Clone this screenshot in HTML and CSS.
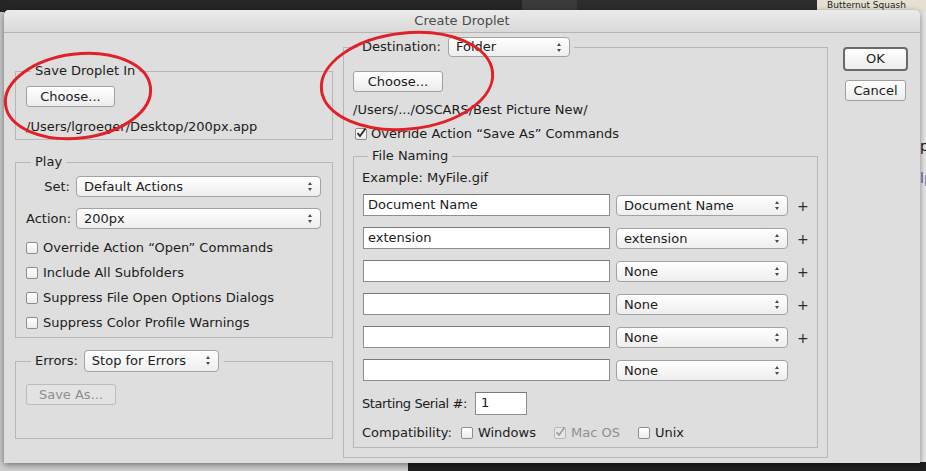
FILE: index.html
```html
<!DOCTYPE html>
<html>
<head>
<meta charset="utf-8">
<link rel="stylesheet" href="styles.css">
</head>
<body>
<div class="desktop">
  <div class="bg-top"><span class="bg-a"></span><span class="bg-b"></span><span class="bg-c"></span><span class="bg-d">Butternut Squash</span></div>
  <div class="bg-right"><span class="bg-p">p</span><span class="bg-lp">lp</span></div>
  <div class="bg-bottom"><span class="bb1"></span><span class="bb2"></span></div>

  <div class="dialog">
    <div class="titlebar">Create Droplet</div>
    <div class="content">
      <div class="leftcol">
        <fieldset class="group save">
          <legend>Save Droplet In</legend>
          <div class="btn choose">Choose...</div>
          <div class="path">/Users/lgroeger/Desktop/200px.app</div>
        </fieldset>

        <fieldset class="group play">
          <legend>Play</legend>
          <div class="formrow">
            <span class="lbl">Set:</span>
            <div class="select wide">Default Actions<span class="arrows"></span></div>
          </div>
          <div class="formrow second">
            <span class="lbl">Action:</span>
            <div class="select wide">200px<span class="arrows"></span></div>
          </div>
          <div class="checks">
            <div class="check"><span class="box"></span>Override Action “Open” Commands</div>
            <div class="check"><span class="box"></span>Include All Subfolders</div>
            <div class="check"><span class="box"></span>Suppress File Open Options Dialogs</div>
            <div class="check"><span class="box"></span>Suppress Color Profile Warnings</div>
          </div>
        </fieldset>

        <fieldset class="group errors">
          <legend><span class="errlbl">Errors:</span><div class="select errsel">Stop for Errors<span class="arrows"></span></div></legend>
          <div class="btn disabled">Save As...</div>
        </fieldset>
      </div>

      <fieldset class="group dest">
        <legend><span class="destlbl">Destination:</span><div class="select destsel">Folder<span class="arrows"></span></div></legend>
        <div class="btn choose2">Choose...</div>
        <div class="path2">/Users/.../OSCARS/Best Picture New/</div>
        <div class="check override"><span class="box checked"><svg width="12" height="12" viewBox="0 0 12 12"><path d="M2.5 6.2 L5 9 L10.5 1.5" fill="none" stroke="#2a2a2a" stroke-width="1.8"/></svg></span>Override Action “Save As” Commands</div>

        <fieldset class="group naming">
          <legend>File Naming</legend>
          <div class="example">Example: MyFile.gif</div>
          <div class="rows">
            <div class="namerow"><div class="field">Document Name</div><div class="select namesel">Document Name<span class="arrows"></span></div><span class="plus">+</span></div>
            <div class="namerow"><div class="field">extension</div><div class="select namesel">extension<span class="arrows"></span></div><span class="plus">+</span></div>
            <div class="namerow"><div class="field"></div><div class="select namesel">None<span class="arrows"></span></div><span class="plus">+</span></div>
            <div class="namerow"><div class="field"></div><div class="select namesel">None<span class="arrows"></span></div><span class="plus">+</span></div>
            <div class="namerow"><div class="field"></div><div class="select namesel">None<span class="arrows"></span></div><span class="plus">+</span></div>
            <div class="namerow"><div class="field"></div><div class="select namesel">None<span class="arrows"></span></div></div>
          </div>
          <div class="serial"><span class="seriallbl">Starting Serial #:</span><div class="field serialfield">1</div></div>
          <div class="compat">
            <span class="compatlbl">Compatibility:</span>
            <span class="check inl"><span class="box"></span>Windows</span>
            <span class="check inl dis"><span class="box checked dimbox"><svg width="12" height="12" viewBox="0 0 12 12"><path d="M2.5 6.2 L5 9 L10.5 1.5" fill="none" stroke="#9a9a9a" stroke-width="1.6"/></svg></span>Mac OS</span>
            <span class="check inl"><span class="box"></span>Unix</span>
          </div>
        </fieldset>
      </fieldset>

      <div class="buttons">
        <div class="btn ok">OK</div>
        <div class="btn cancel">Cancel</div>
      </div>
    </div>
  </div>

  <svg class="marks" width="926" height="471" viewBox="0 0 926 471">
    <ellipse cx="78" cy="96" rx="73" ry="42" transform="rotate(-7 78 96)" fill="none" stroke="#e02127" stroke-width="3"/>
    <ellipse cx="407" cy="81" rx="86" ry="48" transform="rotate(-6 407 81)" fill="none" stroke="#e02127" stroke-width="3"/>
  </svg>
</div>
</body>
</html>
```

FILE: styles.css
```css
* { box-sizing: border-box; }
html, body { margin: 0; padding: 0; }
body {
  width: 926px;
  height: 471px;
  overflow: hidden;
  font-family: "DejaVu Sans", "Noto Sans", sans-serif;
  font-size: 13px;
  color: #1c1c1c;
  background: #2a2a2a;
}
.desktop {
  position: relative;
  width: 926px;
  height: 471px;
  overflow: hidden;
  background: linear-gradient(to right, #c9c9c9 0, #c9c9c9 4px, #2a2a2a 4px);
}
.bg-top {
  position: absolute;
  left: 0; top: 0;
  width: 926px; height: 12px;
  display: flex;
}
.bg-a { width: 522px; background: #252525; }
.bg-b { width: 55px; background: #3a3a3a; }
.bg-c { width: 240px; background: #2d2d2d; }
.bg-d {
  flex: 1;
  background: #e4e0d2;
  font-size: 9px;
  line-height: 10px;
  padding-left: 10px;
  overflow: hidden;
  white-space: nowrap;
  color: #222;
}
.bg-right {
  position: absolute;
  left: 919px; top: 12px;
  width: 7px; height: 460px;
  background: #e6e6e6;
  overflow: hidden;
}
.bg-p { position: absolute; left: 1px; top: 126px; font-size: 14px; }
.bg-lp { position: absolute; left: 1px; top: 158px; font-size: 14px; color: #3a6cb0; }
.bg-bottom {
  position: absolute;
  left: 0; top: 462px;
  width: 926px; height: 9px;
  display: flex;
}
.bb1 { width: 408px; background: #cfcfcf; }
.bb2 { flex: 1; background: #1f1f1f; }

.dialog {
  position: absolute;
  left: 4px; top: 10px;
  width: 916px; height: 453px;
  background: #dedede;
  border-radius: 5px 5px 0 0;
  box-shadow: 0 2px 6px rgba(0,0,0,0.45);
}
.titlebar {
  height: 23px;
  border-bottom: 1px solid #b4b4b4;
  background: linear-gradient(#ebebeb, #d9d9d9);
  border-radius: 5px 5px 0 0;
  text-align: center;
  line-height: 22px;
  color: #4b4b4b;
  font-size: 13px;
}
.content {
  display: flex;
  align-items: flex-start;
  padding-left: 11px;
}

/* group boxes */
.group {
  margin: 0;
  border: 1px solid #b7b7b7;
  border-radius: 0;
  min-width: 0;
}
.group > legend {
  padding: 0 4px;
  margin-left: 5px;
  line-height: 16px;
  font-size: 13px;
}

.leftcol { width: 318px; margin-top: 30px; display: flex; flex-direction: column; }
.save { padding: 7px 10px 4px 10px; }
.play { margin-top: 14px; padding: 6px 11px 6px 10px; }
.errors { margin-top: 12px; padding: 12px 10px 33px 10px; }
.errors > legend { display: flex; align-items: center; padding-right: 5px; }
.errlbl { margin-right: 6px; }

.btn {
  height: 21px;
  line-height: 19px;
  text-align: center;
  border: 1px solid #a0a0a0;
  border-radius: 3px;
  background: linear-gradient(#ffffff, #ececec);
  color: #1c1c1c;
}
.choose { width: 89px; }
.path { margin-top: 12px; line-height: 16px; }
.disabled { width: 90px; color: #8e8e8e; border-color: #bcbcbc; background: #e3e3e3; }

.select {
  position: relative;
  height: 21px;
  line-height: 19px;
  border: 1px solid #a2a2a2;
  border-radius: 4px;
  background: linear-gradient(#ffffff, #eeeeee);
  padding-left: 7px;
  white-space: nowrap;
  flex: none;
}
.arrows {
  position: absolute;
  right: 7px; top: 5px;
  width: 5px; height: 9px;
}
.arrows::before, .arrows::after {
  content: "";
  position: absolute;
  left: 0;
  border-left: 2.5px solid transparent;
  border-right: 2.5px solid transparent;
}
.arrows::before { top: 0; border-bottom: 3px solid #4a4a4a; }
.arrows::after { top: 6px; border-top: 3px solid #4a4a4a; }

.formrow { display: flex; align-items: center; }
.formrow.second { margin-top: 11px; }
.lbl { width: 44px; text-align: right; margin-right: 6px; }
.wide { width: 245px; }

.checks { margin-top: 11px; display: flex; flex-direction: column; gap: 9px; }
.check { display: flex; align-items: center; line-height: 16px; white-space: nowrap; }
.box {
  width: 12px; height: 12px;
  border: 1px solid #8d8d8d;
  border-radius: 2px;
  background: linear-gradient(#ffffff, #ececec);
  margin-right: 5px;
  flex: none;
  position: relative;
}
.box svg { position: absolute; left: -1px; top: -2px; }
.dimbox { border-color: #b9b9b9; background: #e6e6e6; }

.errsel { width: 135px; height: 22px; line-height: 20px; }

/* right */
.dest {
  width: 485px;
  flex: none;
  margin-left: 10px;
  margin-top: 4px;
  padding: 14px 9px 9px 9px;
}
.dest > legend { display: flex; align-items: center; padding-right: 4px; line-height: 20px; }
.destlbl { margin-right: 7px; }
.destsel { width: 122px; height: 20px; line-height: 18px; }
.choose2 { width: 90px; }
.path2 { margin-top: 10px; line-height: 16px; }
.override { margin-top: 8px; margin-left: 2px; }
.override .box { margin-right: 4px; }

.naming { margin-top: 6px; padding: 6px 9px 6px 9px; }
.example { line-height: 16px; margin-left: -1px; }
.rows { margin-top: 8px; display: flex; flex-direction: column; gap: 11px; }
.namerow { display: flex; align-items: center; height: 22px; }
.field {
  height: 22px;
  border: 1px solid #8e8e8e;
  border-top-color: #7a7a7a;
  background: #ffffff;
  line-height: 20px;
  padding-left: 4px;
  flex: none;
}
.namerow .field { width: 247px; }
.namesel { width: 172px; margin-left: 6px; }
.plus {
  margin-left: 9px;
  width: 8px;
  flex: none;
  font-size: 14px;
  line-height: 22px;
  position: relative;
  top: 1px;
  color: #2a2a2a;
  white-space: nowrap;
}

.serial { margin-top: 11px; display: flex; align-items: center; margin-left: -1px; }
.seriallbl { letter-spacing: -0.4px; }
.serialfield { width: 52px; height: 23px; margin-left: 8px; padding-left: 5px; }
.compat { margin-top: 10px; display: flex; align-items: center; margin-left: -1px; line-height: 16px; }
.compatlbl { margin-right: 9px; }
.inl .box { margin-right: 5px; }
.inl { margin-right: 18px; }
.dis { color: #8f8f8f; }

.buttons {
  margin-left: 15px;
  margin-top: 14px;
  display: flex;
  flex-direction: column;
  align-items: center;
  width: 65px;
  flex: none;
}
.ok {
  width: 65px; height: 24px; line-height: 20px;
  border: 2px solid #6a6a6a;
  border-radius: 4px;
}
.cancel { width: 61px; margin-top: 9px; }

.marks { position: absolute; left: 0; top: 0; pointer-events: none; }
```
